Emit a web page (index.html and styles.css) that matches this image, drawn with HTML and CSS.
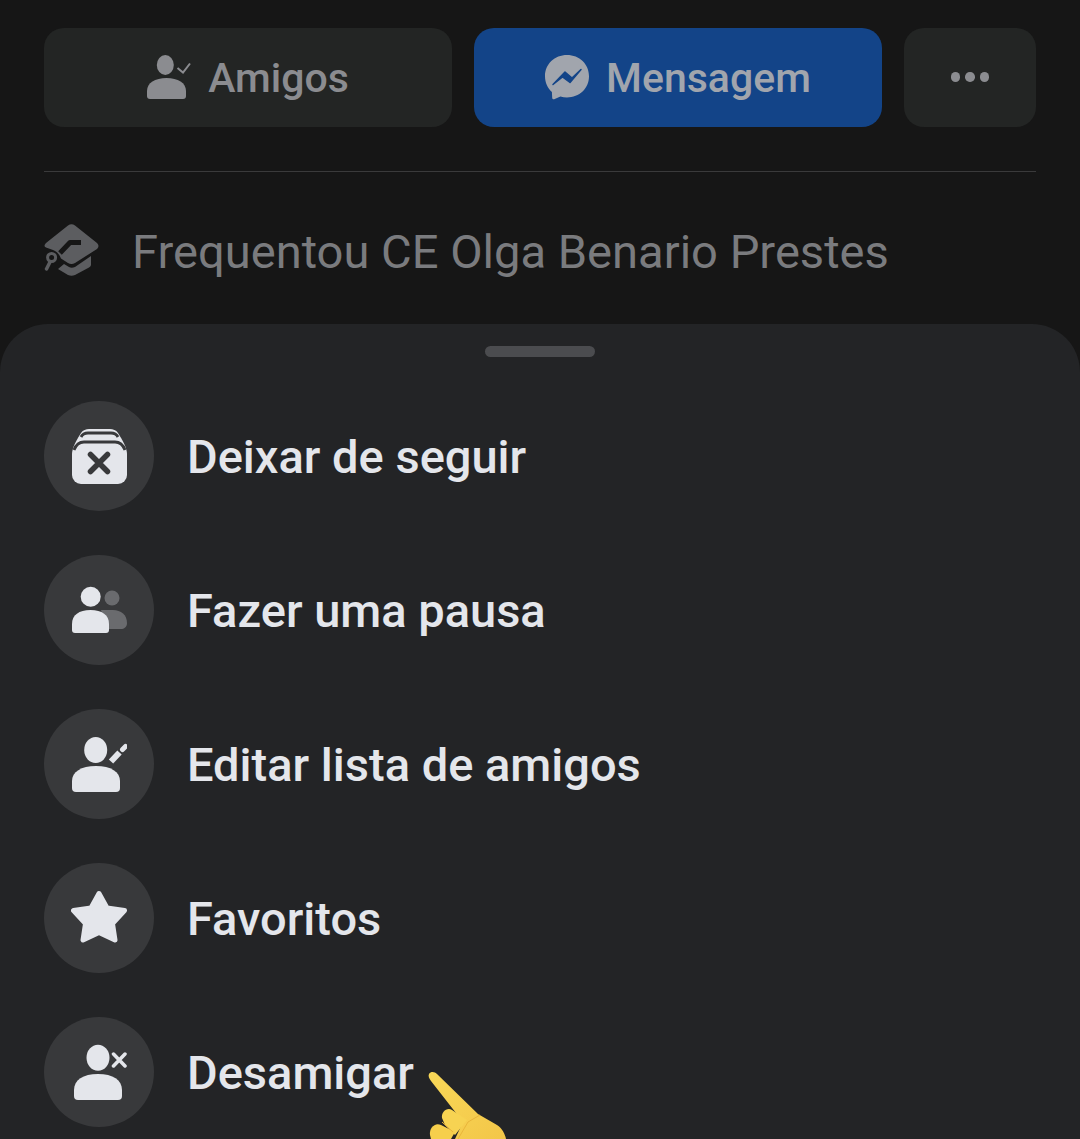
FILE: index.html
```html
<!DOCTYPE html>
<html lang="pt">
<head>
    <meta charset="UTF-8">
    <meta name="viewport" content="width=device-width, initial-scale=1.0">
    <title>Perfil</title>
    <link rel="stylesheet" href="styles.css">
</head>
<body>
    <div class="profile">
        <div class="actions">
            <button class="btn btn-grey">
                <svg class="btn-icon" viewBox="0 0 44 44" fill="#8b8c90">
                    <ellipse cx="18.3" cy="10" rx="8.5" ry="10"/>
                    <path d="M0 36C0 28 8 23 19.500 23C31 23 39 28 39 36V41Q39 44 36 44H3Q0 44 0 41Z"/>
                    <path d="M30.500 13L36 17.500L43 8.500" fill="none" stroke="#8b8c90" stroke-width="2"/>
                </svg>
                <span class="btn-label">Amigos</span>
            </button>
            <button class="btn btn-blue">
                <svg class="btn-icon" viewBox="0 0 44 44">
                    <path fill="#a1a5ad" d="M22 0C9.600 0 0 9.100 0 21.300C0 27.700 2.600 33.200 6.900 37L7.200 43C7.300 44 8.300 44.600 9.200 44.200L15.400 41.500C17.500 42.100 19.700 42.500 22 42.500C34.400 42.500 44 33.400 44 21.300C44 9.100 34.400 0 22 0Z"/>
                    <path fill="#134488" stroke="#134488" stroke-width="1.500" stroke-linejoin="round" d="M8 29.500L20 17L27 23L36 14.500L25 27.500L17.500 22Z"/>
                </svg>
                <span class="btn-label">Mensagem</span>
            </button>
            <button class="btn btn-grey btn-more" aria-label="Mais">
                <span class="dot"></span><span class="dot"></span><span class="dot"></span>
            </button>
        </div>
        <div class="divider"></div>
        <div class="info">
            <svg class="info-icon" viewBox="0 0 56 56" fill="#5c5d60">
                <path d="M24 3.500Q27.500 1 31 3.500L53 21Q56 24 53 27L31 41Q27.500 43 24 41L17 36.500Q14.500 30 9 28L2 25.500Q-1 24 2 21Z"/>
                <path d="M16 31L26 20.500H37" fill="none" stroke="#161616" stroke-width="5" stroke-linejoin="round"/>
                <path d="M20 42L25 45Q27.500 46.500 31 45L47 34V43Q47 44 45 45.500L31 53Q27.500 54.500 24 53L14 47Z"/>
                <circle cx="7.600" cy="35.500" r="4" fill="none" stroke="#5c5d60" stroke-width="3"/>
                <path d="M6 40L2.500 47" stroke="#5c5d60" stroke-width="3.500" stroke-linecap="round"/>
            </svg>
            <span class="info-text">Frequentou CE Olga Benario Prestes</span>
        </div>
    </div>

    <div class="sheet">
        <div class="handle"></div>
        <ul class="menu">
            <li class="menu-item">
                <span class="circle">
                    <svg class="menu-icon" viewBox="0 0 56 56">
                        <path fill="#e4e6eb" d="M1 26C1 20 6 11 10 5C12 2 15 1 18 1H39C42 1 45 2 47 5C51 11 56 20 56 26V47A9 9 0 0 1 47 56H10A9 9 0 0 1 1 47Z"/>
                        <path d="M10 9Q12 5 17 5H40Q45 5 47 9M3 22Q6 14 13 14H44Q51 14 54 22" fill="none" stroke="#38393b" stroke-width="2.800"/>
                        <path d="M19.500 26.500L36.500 43.500M36.500 26.500L19.500 43.500" stroke="#38393b" stroke-width="5.500" stroke-linecap="round"/>
                    </svg>
                </span>
                <span class="menu-label">Deixar de seguir</span>
            </li>
            <li class="menu-item">
                <span class="circle">
                    <svg class="menu-icon" viewBox="0 0 56 56">
                        <circle cx="41" cy="16" r="7.500" fill="#6a6b6e"/>
                        <path fill="#6a6b6e" d="M30 28H42C50 28 56 33 56 41C56 45 53 47 50 47H36Z"/>
                        <circle cx="19.700" cy="14.700" r="10" fill="#e4e6eb"/>
                        <path fill="#e4e6eb" d="M1 42C1 33 8 28 19.500 28C31 28 38 33 38 42V48Q38 51 35 51H4Q1 51 1 48Z"/>
                    </svg>
                </span>
                <span class="menu-label">Fazer uma pausa</span>
            </li>
            <li class="menu-item">
                <span class="circle">
                    <svg class="menu-icon" viewBox="0 0 56 56">
                        <ellipse cx="24.700" cy="14" rx="11.500" ry="13" fill="#e4e6eb"/>
                        <path fill="#e4e6eb" d="M1 45C1 36 10 30 25 30C40 30 49 36 49 45V52Q49 56 45 56H5Q1 56 1 52Z"/>
                        <path d="M40 25.500L48.500 16.500" stroke="#e4e6eb" stroke-width="6"/>
                        <path d="M51.500 13.500L54.500 10.500" stroke="#e4e6eb" stroke-width="5" stroke-linecap="round"/>
                    </svg>
                </span>
                <span class="menu-label">Editar lista de amigos</span>
            </li>
            <li class="menu-item">
                <span class="circle">
                    <svg class="menu-icon" viewBox="0 0 56 56">
                        <path fill="#e4e6eb" stroke="#e4e6eb" stroke-width="5" stroke-linejoin="round" d="M28 3.500L36 18L53.500 20.500L41.500 33.500L44 50L28 42.500L12 50L14.500 33.500L2.500 20.500L20 18Z"/>
                    </svg>
                </span>
                <span class="menu-label">Favoritos</span>
            </li>
            <li class="menu-item">
                <span class="circle">
                    <svg class="menu-icon" viewBox="0 0 56 56">
                        <ellipse cx="27" cy="13.700" rx="11.500" ry="13" fill="#e4e6eb"/>
                        <path fill="#e4e6eb" d="M3 46C3 36 12 30 27 30C42 30 51 36 51 46V52Q51 56 47 56H7Q3 56 3 52Z"/>
                        <path d="M42.500 10L54 22M54 10L42.500 22" stroke="#e4e6eb" stroke-width="3.500" stroke-linecap="round"/>
                    </svg>
                </span>
                <span class="menu-label">Desamigar</span>
                <svg class="pointer" viewBox="0 0 85 69">
                    <defs>
                        <linearGradient id="skin" x1="0" y1="0" x2="1" y2="1">
                            <stop offset="0" stop-color="#f9d858"/>
                            <stop offset="1" stop-color="#f3c648"/>
                        </linearGradient>
                    </defs>
                    <path fill="url(#skin)" d="M4 4C6 1 10 2 12 4L53 44L72 55C77 58 80 64 81 69H30L38 52L6 11C4 8 3 6 4 4Z"/>
                    <path fill="#f7d352" d="M17 48C16 42 22 37 27 40L42 50L30 65L20 55Z"/>
                    <path fill="#f6cf4c" d="M5 65C4 58 10 52 16 55L30 62L26 69H6Z"/>
                    <path fill="none" stroke="#e9b53a" stroke-width="1" d="M55 45L43 52L33 69M17 52L28 62"/>
                </svg>
            </li>
        </ul>
    </div>
</body>
</html>
```
FILE: styles.css
```css
* {
    box-sizing: border-box;
}

html,
body {
    margin: 0;
    height: 1139px;
    overflow: hidden;
}

body {
    display: flex;
    flex-direction: column;
    font-family: Roboto, sans-serif;
    background-color: #161616;
}

.profile {
    height: 324px;
    padding: 28px 44px 0;
}

.actions {
    display: flex;
    gap: 22px;
}

.btn {
    flex: 1;
    display: flex;
    align-items: center;
    justify-content: center;
    gap: 17px;
    height: 99px;
    border: none;
    border-radius: 20px;
    padding: 0 0 1px;
    font-family: inherit;
    font-size: 41px;
    font-weight: 500;
}

.btn-grey {
    background-color: #232524;
    color: #8b8c90;
}

.btn-blue {
    background-color: #134488;
    color: #a1a5ad;
}

.btn-more {
    flex: 0 0 132px;
    gap: 5px;
}

.btn-icon {
    width: 44px;
    height: 44px;
    overflow: visible;
}

.btn-label {
    padding-top: 2px;
}

.dot {
    width: 9.500px;
    height: 9.500px;
    border-radius: 50%;
    background-color: #8b8c90;
}

.divider {
    height: 1px;
    margin-top: 44px;
    background-color: #3a3a3b;
}

.info {
    display: flex;
    align-items: center;
    gap: 32px;
    height: 152px;
    padding-top: 6px;
}

.info-icon {
    width: 56px;
    height: 56px;
    margin-top: -3px;
    overflow: visible;
}

.info-text {
    font-size: 47.100px;
    color: #7a7b7e;
}

.sheet {
    flex: 1;
    padding-top: 22px;
    border-radius: 48px 48px 0 0;
    background-color: #232426;
}

.handle {
    width: 110px;
    height: 11px;
    margin: 0 auto 44px;
    border-radius: 6px;
    background-color: #4b4c4f;
}

.menu {
    display: flex;
    flex-direction: column;
    gap: 44px;
    margin: 0;
    padding: 0 44px;
    list-style: none;
}

.menu-item {
    position: relative;
    display: flex;
    align-items: center;
    gap: 33px;
}

.circle {
    display: flex;
    align-items: center;
    justify-content: center;
    width: 110px;
    height: 110px;
    border-radius: 50%;
    background-color: #38393b;
}

.menu-icon {
    width: 56px;
    height: 56px;
}

.menu-label {
    font-size: 47px;
    font-weight: 500;
    color: #e4e6eb;
}

.pointer {
    position: absolute;
    left: 381px;
    top: 53px;
    width: 85px;
    height: 69px;
}
```
